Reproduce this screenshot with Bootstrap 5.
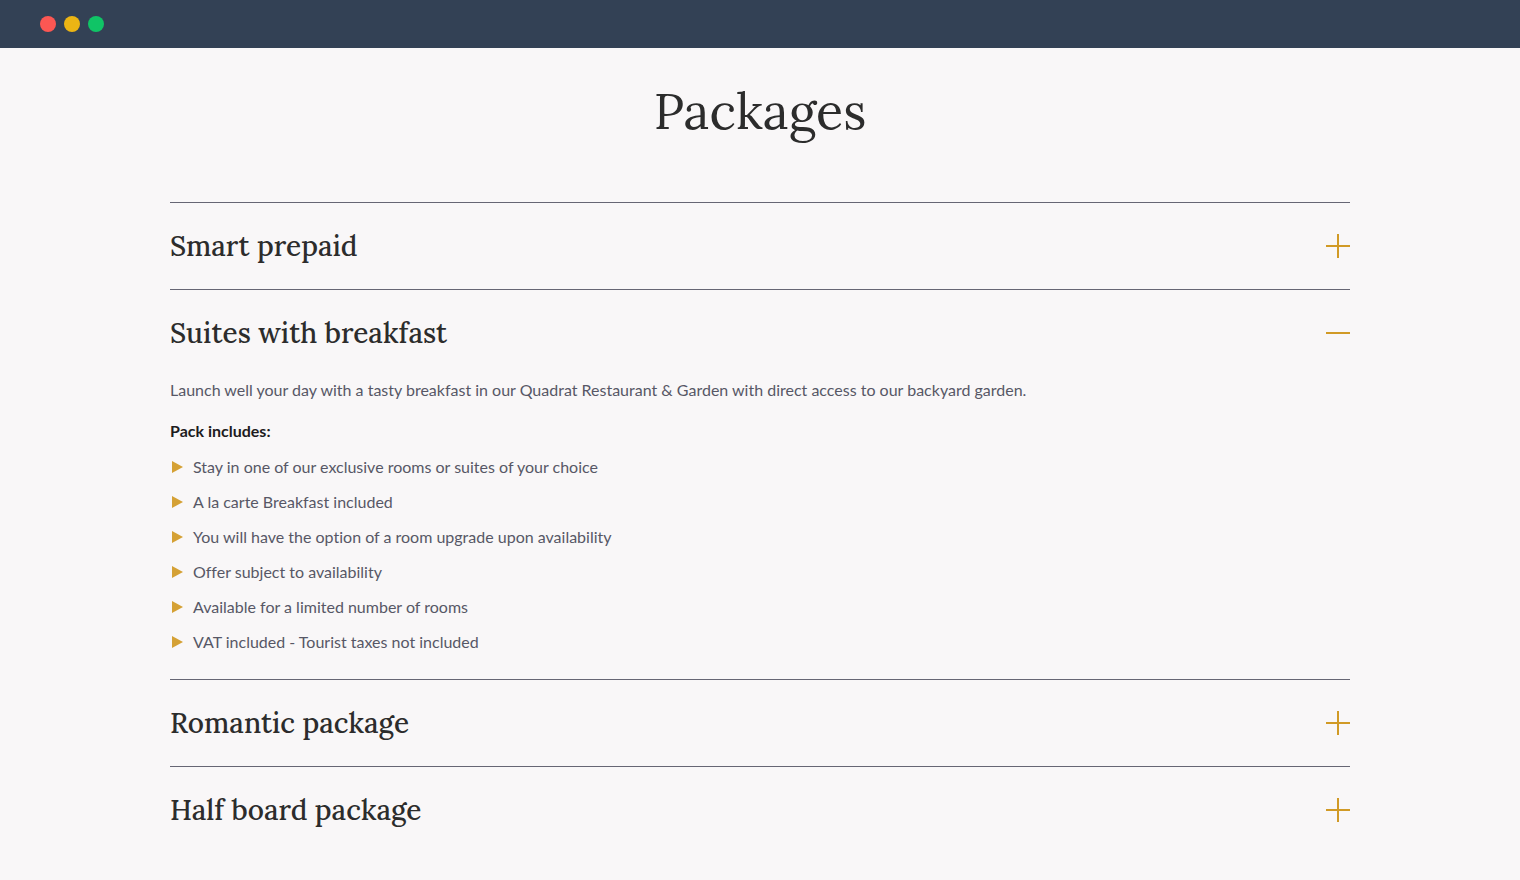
<!DOCTYPE html>
<html lang="en">
<head>
<meta charset="utf-8">
<meta name="viewport" content="width=device-width, initial-scale=1">
<title>Packages</title>
<link href="https://cdn.jsdelivr.net/npm/bootstrap@5.3.0/dist/css/bootstrap.min.css" rel="stylesheet">
<style>
  :root { --ink: #2c2c2c; --muted: #575766; --gold: #d19a26; --title-font: Lora, "Noto Serif", "Liberation Serif", serif; }
  body { background: #f9f7f8; color: var(--muted); font-family: Lato, "Open Sans", sans-serif; font-size: 16px; line-height: 24px; font-variant-ligatures: none; }

  .topbar { background: #334155; height: 48px; padding: 0 40px; }
  .dot { width: 16px; height: 16px; }
  .dot-red { background: #fc5753; }
  .dot-yellow { background: #ecb514; }
  .dot-green { background: #10c466; }

  .page-width { max-width: 1180px; }
  .page-title { font-family: var(--title-font); font-size: 50px; line-height: 64px; color: var(--ink); margin: 31px 0 59px; }

  .accordion { --bs-accordion-bg: transparent; --bs-accordion-color: var(--muted); }
  .accordion .accordion-item { border: 0; border-top: 1px solid #666674; border-radius: 0; }
  .accordion .accordion-button { font-family: var(--title-font); font-size: 28px; line-height: 38px; font-weight: 500; color: var(--ink); padding: 24px 0; background: none; box-shadow: none; }
  .accordion .accordion-button::after { display: none; }
  .accordion-button:not(.collapsed) .bar-v { display: none; }
  .accordion .accordion-body { padding: 2px 0 25px; }

  .intro { margin-bottom: 17px; }
  .pack-label { font-size: 16px; line-height: 24px; color: #1d1b20; margin-bottom: 12px; }
  .pack-list { gap: 11px; }
  .pack-list li { gap: 10px; }
</style>
</head>
<body>
<svg class="d-none" aria-hidden="true">
  <symbol id="toggle" viewBox="0 0 24 24"><path d="M0 12H24" stroke="#d19a26" stroke-width="2"/></symbol>
  <symbol id="arrow" viewBox="0 0 13 12"><path d="M2 0L13 6L2 12Z" fill="#d5a135"/></symbol>
</svg>

<header class="topbar d-flex align-items-center gap-2">
  <span class="dot dot-red rounded-circle"></span>
  <span class="dot dot-yellow rounded-circle"></span>
  <span class="dot dot-green rounded-circle"></span>
</header>

<main class="page-width container-fluid p-0">
  <h1 class="page-title text-center fw-normal">Packages</h1>

  <div class="accordion" id="packages">
    <section class="accordion-item">
      <h2 class="accordion-header">
        <button class="accordion-button collapsed justify-content-between" type="button" data-bs-toggle="collapse" data-bs-target="#pack-smart" aria-expanded="false" aria-controls="pack-smart">
          Smart prepaid
          <svg width="24" height="24" aria-hidden="true"><use href="#toggle"/><path class="bar-v" d="M12 0V24" stroke="#d19a26" stroke-width="2"/></svg>
        </button>
      </h2>
      <div id="pack-smart" class="accordion-collapse collapse" data-bs-parent="#packages"></div>
    </section>

    <section class="accordion-item">
      <h2 class="accordion-header">
        <button class="accordion-button justify-content-between" type="button" data-bs-toggle="collapse" data-bs-target="#pack-suites" aria-expanded="true" aria-controls="pack-suites">
          Suites with breakfast
          <svg width="24" height="24" aria-hidden="true"><use href="#toggle"/><path class="bar-v" d="M12 0V24" stroke="#d19a26" stroke-width="2"/></svg>
        </button>
      </h2>
      <div id="pack-suites" class="accordion-collapse collapse show" data-bs-parent="#packages">
        <div class="accordion-body">
          <p class="intro">Launch well your day with a tasty breakfast in our Quadrat Restaurant &amp; Garden with direct access to our backyard garden.</p>
          <h3 class="pack-label fw-bold">Pack includes:</h3>
          <ul class="pack-list list-unstyled d-flex flex-column mb-0">
            <li class="d-flex align-items-center"><svg width="13" height="12" aria-hidden="true"><use href="#arrow"/></svg>Stay in one of our exclusive rooms or suites of your choice</li>
            <li class="d-flex align-items-center"><svg width="13" height="12" aria-hidden="true"><use href="#arrow"/></svg>A la carte Breakfast included</li>
            <li class="d-flex align-items-center"><svg width="13" height="12" aria-hidden="true"><use href="#arrow"/></svg>You will have the option of a room upgrade upon availability</li>
            <li class="d-flex align-items-center"><svg width="13" height="12" aria-hidden="true"><use href="#arrow"/></svg>Offer subject to availability</li>
            <li class="d-flex align-items-center"><svg width="13" height="12" aria-hidden="true"><use href="#arrow"/></svg>Available for a limited number of rooms</li>
            <li class="d-flex align-items-center"><svg width="13" height="12" aria-hidden="true"><use href="#arrow"/></svg>VAT included - Tourist taxes not included</li>
          </ul>
        </div>
      </div>
    </section>

    <section class="accordion-item">
      <h2 class="accordion-header">
        <button class="accordion-button collapsed justify-content-between" type="button" data-bs-toggle="collapse" data-bs-target="#pack-romantic" aria-expanded="false" aria-controls="pack-romantic">
          Romantic package
          <svg width="24" height="24" aria-hidden="true"><use href="#toggle"/><path class="bar-v" d="M12 0V24" stroke="#d19a26" stroke-width="2"/></svg>
        </button>
      </h2>
      <div id="pack-romantic" class="accordion-collapse collapse" data-bs-parent="#packages"></div>
    </section>

    <section class="accordion-item">
      <h2 class="accordion-header">
        <button class="accordion-button collapsed justify-content-between" type="button" data-bs-toggle="collapse" data-bs-target="#pack-half" aria-expanded="false" aria-controls="pack-half">
          Half board package
          <svg width="24" height="24" aria-hidden="true"><use href="#toggle"/><path class="bar-v" d="M12 0V24" stroke="#d19a26" stroke-width="2"/></svg>
        </button>
      </h2>
      <div id="pack-half" class="accordion-collapse collapse" data-bs-parent="#packages"></div>
    </section>
  </div>
</main>
<script src="https://cdn.jsdelivr.net/npm/bootstrap@5.3.0/dist/js/bootstrap.bundle.min.js"></script>
</body>
</html>
